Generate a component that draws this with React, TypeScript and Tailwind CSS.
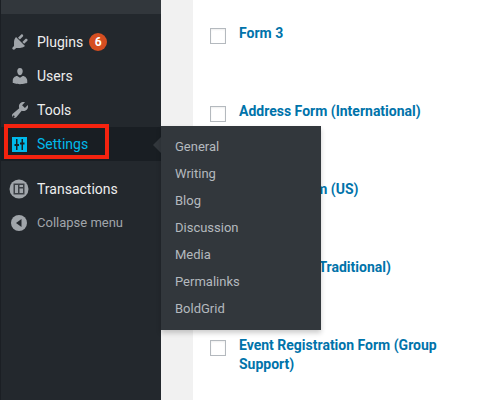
function PluginIcon() {
  return (
    <svg viewBox="0 0 20 20" className="h-5 w-5 fill-[#a0a5aa]">
      <path d="M13.110 4.360L9.870 7.600 8 5.730l3.240-3.240c.35-.34 1.050-.25 1.540.24.49.49.58 1.190.24 1.540zm-8 1.770l.91-1.120 9.010 9.010-1.190.84c-.71.71-2.630 1.160-3.820 1.160H6.140L4.900 17.260c-.59.59-1.540.59-2.120 0-.59-.58-.59-1.530 0-2.120l1.240-1.240v-3.880c0-1.130.46-3.050 1.090-3.890zm7.260 3.970l3.240-3.240c.34-.34 1.040-.25 1.530.24.49.49.59 1.190.24 1.530l-3.240 3.240z" />
    </svg>
  );
}

function UserIcon() {
  return (
    <svg viewBox="0 0 20 20" className="h-5 w-5 fill-[#a0a5aa]">
      <path d="M10 9.250c-2.270 0-2.730-3.440-2.730-3.440C7 4.020 7.820 2 9.970 2c2.160 0 2.980 2.020 2.710 3.810 0 0-.41 3.440-2.680 3.440zm0 2.570L12.720 10c2.390 0 4.520 2.330 4.520 4.530v2.490s-3.650 1.130-7.240 1.130c-3.650 0-7.240-1.130-7.240-1.130v-2.490c0-2.250 1.940-4.480 4.440-4.480z" />
    </svg>
  );
}

function WrenchIcon() {
  return (
    <svg viewBox="0 0 20 20" className="h-5 w-5 fill-[#a0a5aa]" fillRule="evenodd">
      <path d="M16.680 9.770c-1.340 1.340-3.300 1.670-4.950.99l-5.410 6.520c-.99.99-2.590.99-3.570 0-.99-.98-.99-2.580 0-3.570l6.520-5.420c-.68-1.650-.35-3.610.99-4.950 1.280-1.280 3.120-1.620 4.720-1.060l-2.890 2.890 2.820 2.820 2.890-2.890c.56 1.600.22 3.440-1.060 4.720zM4.340 17.130c.39-.39.39-1.020 0-1.410s-1.030-.39-1.420 0-.39 1.020 0 1.410 1.030.39 1.420 0z" />
    </svg>
  );
}

function SlidersIcon() {
  return (
    <svg viewBox="0 0 15 15" className="h-[15px] w-[15px]">
      <rect width="15" height="15" fill="#00b9eb" />
      <path d="M4 2h1.500v5H7v2H5.500v4H4V9H2.500V7H4zM9.500 2H11v3.500h1.500v2H11V13H9.500V7.500H8v-2h1.500z" fill="#191e23" />
    </svg>
  );
}

function TransactionsIcon() {
  return (
    <svg viewBox="0 0 20 20" className="h-5 w-5">
      <circle cx="10" cy="10" r="9.500" fill="#a0a5aa" />
      <path d="M4.500 4.500h11v11h-11zM6 6v8h3V6zM10.500 6v2H14V6zM10.500 9.500V14H14V9.500z" fill="#3c4146" fillRule="evenodd" />
    </svg>
  );
}

function CollapseIcon() {
  return (
    <svg viewBox="0 0 16 16" className="h-4 w-4">
      <circle cx="8" cy="8" r="8" fill="#a0a5aa" />
      <path d="M10.500 4v8L5 8z" fill="#23282d" />
    </svg>
  );
}

const submenu = ["General", "Writing", "Blog", "Discussion", "Media", "Permalinks", "BoldGrid"];

const forms = [
  { title: "Form 3", rowClass: "h-[78px]" },
  { title: "Address Form (International)", rowClass: "h-[78px]" },
  { title: "Address Form (US)", rowClass: "h-[78px]" },
  { title: "Event Form (Traditional)", rowClass: "h-[78px]" },
  { title: "Event Registration Form (Group Support)", rowClass: "" },
];

export default function App() {
  return (
    <div className="relative flex h-[400px] w-[500px] overflow-hidden bg-white font-['Roboto',sans-serif]">
      {/* Sidebar */}
      <div className="flex w-[161px] shrink-0 flex-col border-l border-[#1b1f24] bg-[#23282d]">
        <div className="h-[14px] bg-[#32373c]" />
        <div className="h-[11px]" />
        <div className="flex h-[34px] items-center pl-[9px] text-[14px] text-[#eeeeee]">
          <PluginIcon />
          <span className="ml-[7px]">Plugins</span>
          <span className="ml-[6px] flex h-[18px] w-[18px] items-center justify-center rounded-full bg-[#d54e21] text-[12px] font-bold text-white">6</span>
        </div>
        <div className="flex h-[34px] items-center pl-[9px] text-[14px] text-[#eeeeee]">
          <UserIcon />
          <span className="ml-[7px]">Users</span>
        </div>
        <div className="flex h-[34px] items-center pl-[9px] text-[14px] text-[#eeeeee]">
          <WrenchIcon />
          <span className="ml-[7px]">Tools</span>
        </div>
        <div className="flex h-[34px] items-center bg-[#191e23] pl-[11px] text-[14px] text-[#00b9eb]">
          <SlidersIcon />
          <span className="ml-[10px]">Settings</span>
        </div>
        <div className="h-[11px]" />
        <div className="flex h-[34px] items-center pl-[8px] text-[14px] text-[#eeeeee]">
          <TransactionsIcon />
          <span className="ml-[8px]">Transactions</span>
        </div>
        <div className="flex h-[34px] items-center pl-[10px] text-[13px] text-[#a0a5aa]">
          <CollapseIcon />
          <span className="ml-[10px]">Collapse menu</span>
        </div>
      </div>

      {/* Page gutter */}
      <div className="w-[32px] shrink-0 bg-[#f1f1f1]" />

      {/* Form list */}
      <div className="flex-1 pl-[17px] pr-[20px] pt-[24px]">
        {forms.map((form) => (
          <div key={form.title} className={`flex ${form.rowClass}`}>
            <div className="mt-[4px] h-4 w-4 shrink-0 border border-[#b4b9be] bg-white shadow-[inset_0_1px_2px_rgba(0,0,0,0.07)]" />
            <div className="ml-[13px] text-[14px] font-bold leading-[19px] text-[#0073aa]">{form.title}</div>
          </div>
        ))}
      </div>

      {/* Red highlight around Settings */}
      <div className="absolute left-[4px] top-[124px] h-[35px] w-[105px] border-[4px] border-[#f5230f]" />

      {/* Flyout */}
      <div className="absolute left-[153px] top-[137px] h-0 w-0 border-y-[8px] border-r-[8px] border-y-transparent border-r-[#32373c]" />
      <div className="absolute left-[161px] top-[126px] flex h-[204px] w-[160px] flex-col bg-[#32373c] pb-[5px] pt-[7px] shadow-[0_3px_5px_rgba(0,0,0,0.2)]">
        {submenu.map((item) => (
          <div key={item} className="flex h-[27px] items-center pl-[14px] text-[13px] text-[#b4b9be]">
            {item}
          </div>
        ))}
      </div>
    </div>
  );
}
